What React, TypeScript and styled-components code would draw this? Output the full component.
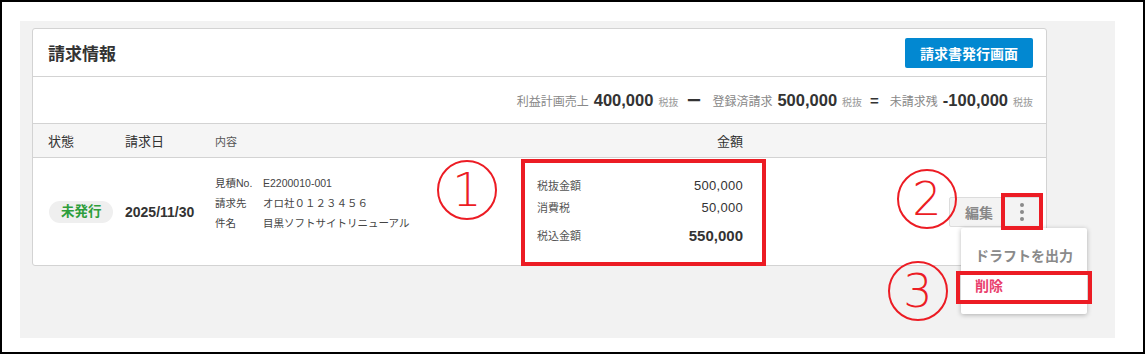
import React from "react";
import styled, { createGlobalStyle } from "styled-components";

const GlobalStyle = createGlobalStyle`
  body {
    margin: 0;
    background: #fff;
    font-family: "Liberation Sans", "Noto Sans CJK JP", sans-serif;
    color: #333;
  }
`;

const RED = "#ec1c24";

export default function App() {
    return (
        <>
            <GlobalStyle/>
            <Frame>
                <Panel>
                    <Card>
                        <CardHeader>
                            <Title>請求情報</Title>
                            <PrimaryButton>請求書発行画面</PrimaryButton>
                        </CardHeader>
                        <Summary>
                            <SumLabel>利益計画売上</SumLabel>
                            <SumValue>400,000</SumValue>
                            <TaxNote>税抜</TaxNote>
                            <Operator>ー</Operator>
                            <SumLabel>登録済請求</SumLabel>
                            <SumValue>500,000</SumValue>
                            <TaxNote>税抜</TaxNote>
                            <Operator>=</Operator>
                            <SumLabel>未請求残</SumLabel>
                            <SumValue>-100,000</SumValue>
                            <TaxNote>税抜</TaxNote>
                        </Summary>
                        <HeadRow>
                            <HeadCell>状態</HeadCell>
                            <HeadCell>請求日</HeadCell>
                            <HeadCell $small>内容</HeadCell>
                            <HeadCell $right>金額</HeadCell>
                        </HeadRow>
                        <BodyRow>
                            <div><StatusBadge>未発行</StatusBadge></div>
                            <DateText>2025/11/30</DateText>
                            <Details>
                                <span>見積No.</span>
                                <span>E2200010-001</span>
                                <span>請求先</span>
                                <span>オロ社０１２３４５６</span>
                                <span>件名</span>
                                <span>目黒ソフトサイトリニューアル</span>
                            </Details>
                            <AmountCell>
                                <AmountLine>
                                    <AmountLabel>税抜金額</AmountLabel>
                                    <AmountValue>500,000</AmountValue>
                                </AmountLine>
                                <AmountLine>
                                    <AmountLabel>消費税</AmountLabel>
                                    <AmountValue>50,000</AmountValue>
                                </AmountLine>
                                <AmountLine $total>
                                    <AmountLabel>税込金額</AmountLabel>
                                    <AmountValue $total>550,000</AmountValue>
                                </AmountLine>
                                <RedFrame $inset="1px -1px -1px 0"/>
                            </AmountCell>
                            <Spacer/>
                            <Actions>
                                <ButtonGroup>
                                    <EditButton>編集</EditButton>
                                    <KebabButton>
                                        <Dot/><Dot/><Dot/>
                                        <RedFrame $inset="-5px -3px -4px -2px"/>
                                    </KebabButton>
                                </ButtonGroup>
                                <Menu>
                                    <MenuItem>ドラフトを出力</MenuItem>
                                    <MenuItem $danger>
                                        削除
                                        <RedFrame $inset="0 -5px -3px -5px"/>
                                    </MenuItem>
                                </Menu>
                            </Actions>
                            <Marker $x={404} $y={2}>1</Marker>
                            <Marker $x={864} $y={11}>2</Marker>
                            <Marker $x={855} $y={103}>3</Marker>
                        </BodyRow>
                    </Card>
                </Panel>
            </Frame>
        </>
    );
}

const Frame = styled.div`
  box-sizing: border-box;
  width: 1145px;
  height: 354px;
  border: 2px solid #000;
  padding: 19px 0 0 18px;
`;

const Panel = styled.div`
  box-sizing: border-box;
  width: 1095px;
  height: 317px;
  background: #f2f2f2;
  padding: 7px 12px;
`;

const Card = styled.div`
  box-sizing: border-box;
  width: 1015px;
  background: #fff;
  border: 1px solid #d3d3d3;
  border-radius: 3px;
`;

const CardHeader = styled.div`
  display: flex;
  align-items: center;
  justify-content: space-between;
  height: 47px;
  padding: 0 13px 0 15px;
  border-bottom: 1px solid #d3d3d3;
`;

const Title = styled.h2`
  margin: 0;
  font-size: 17px;
  font-weight: bold;
  color: #333;
`;

const PrimaryButton = styled.button`
  width: 128px;
  height: 30px;
  border: none;
  border-radius: 2px;
  background: #0288d1;
  color: #fff;
  font-family: inherit;
  font-size: 14px;
  font-weight: bold;
  padding: 0;
`;

const Summary = styled.div`
  display: flex;
  align-items: baseline;
  justify-content: flex-end;
  height: 46px;
  padding: 0 13px;
  line-height: 46px;
  border-bottom: 1px solid #d3d3d3;
`;

const SumLabel = styled.span`
  font-size: 12px;
  color: #888;
  margin-right: 5px;
`;

const SumValue = styled.span`
  font-size: 16.5px;
  font-weight: bold;
  color: #333;
  margin-right: 5px;
`;

const TaxNote = styled.span`
  font-size: 10px;
  color: #999;
`;

const Operator = styled.span`
  font-size: 15px;
  font-weight: bold;
  color: #333;
  margin: 0 11px 0 8px;
`;

const rowColumns = `
  display: grid;
  grid-template-columns: 77px 90px 306px 244px 1fr auto;
  padding: 0 5px 0 15px;
`;

const HeadRow = styled.div`
  ${rowColumns};
  align-items: center;
  height: 33px;
  background: #f5f5f5;
  border-bottom: 1px solid #d3d3d3;
`;

const HeadCell = styled.div<{ $small?: boolean; $right?: boolean }>`
  font-size: ${p => (p.$small ? "11px" : "13px")};
  color: ${p => (p.$small ? "#555" : "#333")};
  text-align: ${p => (p.$right ? "right" : "left")};
  padding-right: ${p => (p.$right ? "22px" : "0")};
`;

const BodyRow = styled.div`
  ${rowColumns};
  position: relative;
  align-items: center;
  height: 107px;
`;

const StatusBadge = styled.span`
  display: inline-block;
  height: 22px;
  line-height: 22px;
  padding: 0 11px 0 12px;
  border-radius: 11px;
  background: #efefef;
  color: #2e9e3c;
  font-size: 13.5px;
  font-weight: bold;
  margin-left: 1px;
`;

const DateText = styled.div`
  font-size: 14px;
  font-weight: bold;
  color: #333;
`;

const Details = styled.div`
  align-self: start;
  display: grid;
  grid-template-columns: 48px auto;
  padding-top: 15px;
  line-height: 20px;
  font-size: 10.5px;
  color: #444;
`;

const AmountCell = styled.div`
  position: relative;
  align-self: stretch;
  padding: 16px 22px 0 16px;
`;

const AmountLine = styled.div<{ $total?: boolean }>`
  display: flex;
  justify-content: space-between;
  align-items: center;
  height: 22px;
  margin-top: ${p => (p.$total ? "6px" : "0")};
`;

const AmountLabel = styled.span`
  font-size: 11px;
  color: #555;
`;

const AmountValue = styled.span<{ $total?: boolean }>`
  font-size: ${p => (p.$total ? "15px" : "13px")};
  font-weight: ${p => (p.$total ? "bold" : "normal")};
  color: #333;
  letter-spacing: ${p => (p.$total ? "0" : "0.3px")};
`;

const Spacer = styled.div``;

const Actions = styled.div`
  position: relative;
`;

const ButtonGroup = styled.div`
  display: flex;
  height: 30px;
  box-sizing: border-box;
  border: 1px solid #dcdcdc;
  border-radius: 2px;
  background: #f3f3f3;
`;

const EditButton = styled.button`
  border: none;
  background: none;
  padding: 0 10px 0 15px;
  font-family: inherit;
  font-size: 14px;
  font-weight: bold;
  color: #888;
`;

const KebabButton = styled.button`
  position: relative;
  width: 37px;
  border: none;
  background: none;
  padding: 0;
  display: flex;
  flex-direction: column;
  align-items: center;
  justify-content: center;
  gap: 3px;
`;

const Dot = styled.span`
  width: 4px;
  height: 4px;
  border-radius: 50%;
  background: #8a8a8a;
`;

const Menu = styled.div`
  position: absolute;
  top: calc(100% + 1px);
  right: -46px;
  width: 126px;
  padding: 13px 0;
  background: #fff;
  border-radius: 2px;
  box-shadow: 0 1px 5px rgba(0, 0, 0, 0.28);
  z-index: 2;
`;

const MenuItem = styled.div<{ $danger?: boolean }>`
  position: relative;
  height: 30px;
  line-height: 30px;
  padding-left: 14px;
  font-size: 14px;
  font-weight: bold;
  color: ${p => (p.$danger ? "#e9406d" : "#8a8a8a")};
  white-space: nowrap;
`;

const RedFrame = styled.span<{ $inset: string }>`
  position: absolute;
  inset: ${p => p.$inset};
  border: 4px solid ${RED};
  pointer-events: none;
  z-index: 3;
`;

const Marker = styled.span<{ $x: number; $y: number }>`
  position: absolute;
  left: ${p => p.$x}px;
  top: ${p => p.$y}px;
  box-sizing: border-box;
  width: 60px;
  height: 60px;
  border: 2px solid ${RED};
  border-radius: 50%;
  display: flex;
  align-items: center;
  justify-content: center;
  font-family: "DejaVu Sans", sans-serif;
  font-size: 46px;
  font-weight: 200;
  line-height: 1;
  color: ${RED};
  z-index: 4;
`;
